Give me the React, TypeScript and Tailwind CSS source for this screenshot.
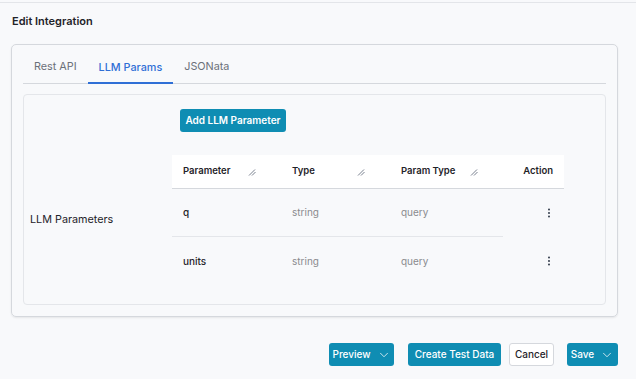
import { ChevronDown } from 'lucide-react';

const font = { fontFamily: 'Inter, "Noto Sans", sans-serif' };

function ResizeMark() {
  return (
    <svg width="8" height="8" viewBox="0 0 8 8" className="text-gray-500">
      <path d="M1 7.5 L7 1.5 M4 7.5 L7.5 4" stroke="currentColor" strokeWidth="0.9" fill="none" />
    </svg>
  );
}

function Kebab() {
  return (
    <svg width="4" height="10" viewBox="0 0 4 10" className="text-gray-800">
      <circle cx="2" cy="1.5" r="0.9" fill="currentColor" />
      <circle cx="2" cy="5" r="0.9" fill="currentColor" />
      <circle cx="2" cy="8.5" r="0.9" fill="currentColor" />
    </svg>
  );
}

const rows = [
  { name: 'q', type: 'string', param: 'query' },
  { name: 'units', type: 'string', param: 'query' },
];

export default function App() {
  return (
    <div className="w-[636px] h-[379px] bg-[#f8f9fb] pt-[2px] overflow-hidden" style={font}>
      <div className="border-t border-[#e3e5e9] h-full">
        <h1 className="pl-3 pt-[11px] text-[11px] font-semibold text-[#1f2329] leading-[14px]">
          Edit Integration
        </h1>

        <div className="ml-[11px] mt-[16px] w-[607px] rounded-[5px] border border-[#d5d8dd] shadow-[0_1px_2px_rgba(0,0,0,0.08)] px-[11px] pb-[11px]">
          <div className="flex h-[39px] items-end border-b border-[#d5d8dd] text-[10.8px]">
            <div className="px-[11px] h-[29px] leading-[25px] text-[#6b7079]">Rest API</div>
            <div className="px-[11px] h-[29px] leading-[25px] text-[#2f6fd6] border-b-2 border-[#2f6fd6] -mb-px font-medium">
              LLM Params
            </div>
            <div className="px-[11px] h-[29px] leading-[25px] text-[#6b7079]">JSONata</div>
          </div>

          <div className="mt-[10px] h-[211px] rounded-[4px] border border-[#e4e6ea] pt-[14px]">
            <div className="flex">
              <div className="w-[148px]" />
              <button className="ml-[8px] h-[23px] w-[106px] rounded-[3px] bg-[#0f8db3] text-white text-[10px] font-semibold">
                Add LLM Parameter
              </button>
            </div>

            <div className="flex mt-[23px]">
              <div className="w-[148px] flex items-center pl-[6px] text-[10.8px] text-[#1f2329]">
                LLM Parameters
              </div>
              <div className="w-[392px]">
                <div className="flex h-[34px] items-center bg-white border-b border-[#d5d8dd] text-[9.5px] font-semibold text-[#1f2329]">
                  <div className="w-[109px] pl-[11px] pr-[25px] flex items-center justify-between">
                    <span>Parameter</span>
                    <ResizeMark />
                  </div>
                  <div className="w-[109px] pl-[11px] pr-[25px] flex items-center justify-between">
                    <span>Type</span>
                    <ResizeMark />
                  </div>
                  <div className="w-[113px] pl-[11px] pr-[25px] flex items-center justify-between">
                    <span>Param Type</span>
                    <ResizeMark />
                  </div>
                  <div className="w-[61px] pr-[11px] text-right">Action</div>
                </div>
                {rows.map((r, i) => (
                  <div key={r.name} className="flex h-[48px] items-center text-[10px]">
                    <div
                      className={`flex h-full w-[331px] items-center ${i === 0 ? 'border-b border-[#e4e6ea]' : ''}`}
                    >
                      <div className="w-[109px] pl-[11px] font-medium text-[#1f2329]">{r.name}</div>
                      <div className="w-[109px] pl-[11px] text-[#8a8b8e]">{r.type}</div>
                      <div className="w-[113px] pl-[11px] text-[#8a8b8e]">{r.param}</div>
                    </div>
                    <div className="w-[61px] flex justify-end pr-[13px]">
                      <Kebab />
                    </div>
                  </div>
                ))}
              </div>
            </div>
          </div>
        </div>

        <div className="flex justify-end items-center mt-[26px] pr-[18px] text-[10px] font-medium">
          <button className="h-[23px] w-[65px] rounded-[3px] bg-[#0f8db3] text-white flex items-center justify-center gap-[6px]">
            Preview <ChevronDown size={14} strokeWidth={1.3} />
          </button>
          <button className="ml-[14px] h-[23px] w-[93px] rounded-[3px] bg-[#0f8db3] text-white">
            Create Test Data
          </button>
          <button className="ml-[8px] h-[23px] w-[45px] rounded-[3px] bg-white border border-[#d5d8dd] text-[#1f2329]">
            Cancel
          </button>
          <button className="ml-[13px] h-[23px] w-[51px] rounded-[3px] bg-[#0f8db3] text-white flex items-center justify-center gap-[6px]">
            Save <ChevronDown size={14} strokeWidth={1.3} />
          </button>
        </div>
      </div>
    </div>
  );
}
